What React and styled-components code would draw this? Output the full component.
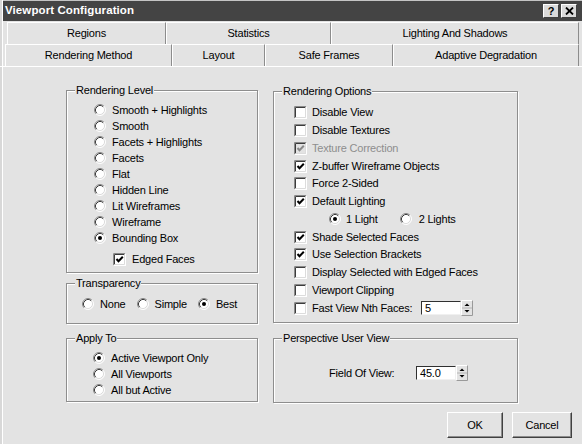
import React from "react";
import styled, { createGlobalStyle } from "styled-components";

const GlobalStyle = createGlobalStyle`
  html, body { margin: 0; padding: 0; background: #e3e3e3; }
  body {
    font-family: "Liberation Sans", Arial, sans-serif;
    font-size: 11px;
    letter-spacing: -0.2px;
    color: #000;
  }
  * { box-sizing: border-box; }
`;

const Window = styled.div`
  width: 582px;
  height: 444px;
  overflow: hidden;
  display: flex;
  flex-direction: column;
  background: #e3e3e3;
  box-shadow: inset 2px 0 0 #d8d8d8, inset 3px 0 0 #ffffff;
`;

const TitleBar = styled.div`
  height: 21px;
  margin-left: 3px;
  border-top: 1px solid #c4c4c4;
  background: #444444;
  display: flex;
  align-items: center;
  justify-content: space-between;
  padding: 0 5px 0 2px;
`;

const TitleText = styled.span`
  color: #fff;
  font-weight: bold;
  font-size: 11.5px;
  letter-spacing: 0.1px;
  line-height: 1;
`;

const CaptionButtons = styled.div`
  display: flex;
  gap: 2px;
`;

const CaptionButton = styled.div`
  width: 16px;
  height: 14px;
  background: #dadada;
  border: 1px solid;
  border-color: #ffffff #404040 #404040 #ffffff;
  display: flex;
  align-items: center;
  justify-content: center;
  font-weight: bold;
  font-size: 11px;
  line-height: 1;
  color: #000;
`;

const TabStrip = styled.div`
  margin-top: 1px;
  display: flex;
  flex-direction: column;
`;

const TabRow = styled.div`
  display: flex;
  height: 22px;
  padding-left: ${(p) => p.$indent}px;
`;

const Tab = styled.div`
  width: ${(p) => p.$w}px;
  border-top: 1px solid #ffffff;
  border-left: 1px solid #ffffff;
  border-right: 1px solid #8c8c8c;
  display: flex;
  align-items: center;
  justify-content: center;
  line-height: 1;
  white-space: nowrap;
`;

const Panel = styled.div`
  border-top: 1px solid #ffffff;
  display: flex;
  gap: 15px;
  padding-left: 66px;
`;

const Column = styled.div`
  width: ${(p) => p.$w}px;
  display: flex;
  flex-direction: column;
  padding-top: ${(p) => p.$top}px;
`;

const Group = styled.div`
  position: relative;
  height: ${(p) => p.$h}px;
  margin-top: ${(p) => p.$mt || 0}px;
  border: 1px solid #8e8e8e;
  box-shadow: inset 1px 1px 0 #ffffff, 1px 1px 0 #ffffff;
  padding: ${(p) => p.$pt}px 0 0 ${(p) => p.$pl}px;
`;

const Legend = styled.span`
  position: absolute;
  top: -7px;
  left: 8px;
  padding: 0 1px;
  background: #e3e3e3;
  line-height: 13px;
  white-space: nowrap;
`;

const OptionRow = styled.div`
  display: flex;
  align-items: center;
  height: ${(p) => p.$h || 16}px;
  gap: ${(p) => (p.$gap == null ? 6 : p.$gap)}px;
  padding-left: ${(p) => p.$indent || 0}px;
  margin-top: ${(p) => p.$mt || 0}px;
  color: ${(p) => (p.$disabled ? "#8e8e8e" : "#000")};
  white-space: nowrap;
  line-height: 1;
`;

const Choice = styled.span`
  display: inline-flex;
  align-items: center;
  gap: ${(p) => p.$gap || 6}px;
`;

const Label = styled.span`
  width: ${(p) => p.$w}px;
  flex: none;
`;

const NumberBox = styled.div`
  width: 40px;
  height: 14px;
  background: #fff;
  border-top: 1px solid #303030;
  border-left: 1px solid #303030;
  border-right: 1px solid #f0f0f0;
  border-bottom: 1px solid #f0f0f0;
  padding-left: 3px;
  display: flex;
  align-items: center;
  font-size: 11px;
`;

const Spin = styled.div`
  display: flex;
  align-items: center;
`;

const Footer = styled.div`
  display: flex;
  justify-content: flex-end;
  gap: 9px;
  padding-right: 10px;
  margin-top: 9px;
`;

const PushButton = styled.div`
  width: ${(p) => p.$w}px;
  height: 26px;
  background: #e3e3e3;
  border: 1px solid;
  border-color: #ffffff #404040 #404040 #ffffff;
  box-shadow: inset -1px -1px 0 #8c8c8c;
  display: flex;
  align-items: center;
  justify-content: center;
  line-height: 1;
`;

const Glyph = styled.svg`
  flex: none;
  display: block;
`;

const Radio = ({ checked }) => (
  <Glyph width="12" height="12" viewBox="0 0 12 12">
    <circle cx="6" cy="6" r="5" fill="#ffffff" />
    <path d="M9.89 2.11 A5.5 5.5 0 0 0 2.11 9.89" fill="none" stroke="#8a8a8a" strokeWidth="1" />
    <path d="M9.18 2.82 A4.5 4.5 0 0 0 2.82 9.18" fill="none" stroke="#3c3c3c" strokeWidth="1" />
    <path d="M9.89 2.11 A5.5 5.5 0 0 1 2.11 9.89" fill="none" stroke="#ffffff" strokeWidth="1" />
    <path d="M9.18 2.82 A4.5 4.5 0 0 1 2.82 9.18" fill="none" stroke="#dcdcdc" strokeWidth="1" />
    {checked && <circle cx="6" cy="6" r="2" fill="#000" />}
  </Glyph>
);

const Check = ({ checked, disabled }) => (
  <Glyph width="13" height="13" viewBox="0 0 13 13">
    <rect x="0" y="0" width="13" height="13" fill={disabled ? "#e3e3e3" : "#ffffff"} />
    <path d="M0.5 12.5 V0.5 H12.5" fill="none" stroke="#8a8a8a" />
    <path d="M1.5 11.5 V1.5 H11.5" fill="none" stroke="#3c3c3c" />
    <path d="M12.5 0.5 V12.5 H0.5" fill="none" stroke="#ffffff" />
    <path d="M11.5 1.5 V11.5 H1.5" fill="none" stroke="#dcdcdc" />
    {checked && (
      <path
        d="M3.5 6 L5.5 8.2 L9.8 3.8"
        fill="none"
        stroke={disabled ? "#8a8a8a" : "#000"}
        strokeWidth="2"
      />
    )}
  </Glyph>
);

const Arrows = () => (
  <Glyph width="12" height="16" viewBox="0 0 12 16">
    <rect x="0" y="0" width="12" height="16" fill="#e3e3e3" />
    <path d="M0.5 15.5 V0.5 H11.5" fill="none" stroke="#ffffff" />
    <path d="M11.5 0.5 V15.5 H0.5" fill="none" stroke="#9a9a9a" />
    <line x1="1" y1="8" x2="11" y2="8" stroke="#b4b4b4" />
    <path d="M6 3.5 L8.5 6 H3.5 Z" fill="#000" />
    <path d="M3.5 10 H8.5 L6 12.5 Z" fill="#000" />
  </Glyph>
);

const CloseGlyph = () => (
  <Glyph width="9" height="8" viewBox="0 0 9 8">
    <path d="M1 0.5 L8 7.5 M8 0.5 L1 7.5" stroke="#000" strokeWidth="1.8" />
  </Glyph>
);

const SpinField = ({ value }) => (
  <Spin>
    <NumberBox>{value}</NumberBox>
    <Arrows />
  </Spin>
);

const levels = [
  ["Smooth + Highlights", false],
  ["Smooth", false],
  ["Facets + Highlights", false],
  ["Facets", false],
  ["Flat", false],
  ["Hidden Line", false],
  ["Lit Wireframes", false],
  ["Wireframe", false],
  ["Bounding Box", true],
];

const ROW = 17.75;

export default function App() {
  return (
    <>
      <GlobalStyle />
      <Window>
        <TitleBar>
          <TitleText>Viewport Configuration</TitleText>
          <CaptionButtons>
            <CaptionButton>?</CaptionButton>
            <CaptionButton>
              <CloseGlyph />
            </CaptionButton>
          </CaptionButtons>
        </TitleBar>

        <TabStrip>
          <TabRow $indent={7}>
            <Tab $w={159}>Regions</Tab>
            <Tab $w={165}>Statistics</Tab>
            <Tab $w={248}>Lighting And Shadows</Tab>
          </TabRow>
          <TabRow $indent={5}>
            <Tab $w={167}>Rendering Method</Tab>
            <Tab $w={93}>Layout</Tab>
            <Tab $w={128}>Safe Frames</Tab>
            <Tab $w={186}>Adaptive Degradation</Tab>
          </TabRow>
        </TabStrip>

        <Panel>
          <Column $w={192} $top={23}>
            <Group $h={183} $pt={11} $pl={27}>
              <Legend>Rendering Level</Legend>
              {levels.map(([name, on]) => (
                <OptionRow key={name}>
                  <Radio checked={on} />
                  <span>{name}</span>
                </OptionRow>
              ))}
              <OptionRow $mt={5} $indent={19}>
                <Check checked />
                <span>Edged Faces</span>
              </OptionRow>
            </Group>

            <Group $h={41} $mt={10} $pt={12} $pl={15}>
              <Legend>Transparency</Legend>
              <OptionRow $gap={11}>
                <Choice>
                  <Radio />
                  <span>None</span>
                </Choice>
                <Choice>
                  <Radio />
                  <span>Simple</span>
                </Choice>
                <Choice>
                  <Radio checked />
                  <span>Best</span>
                </Choice>
              </OptionRow>
            </Group>

            <Group $h={64} $mt={14} $pt={11} $pl={26}>
              <Legend>Apply To</Legend>
              <OptionRow>
                <Radio checked />
                <span>Active Viewport Only</span>
              </OptionRow>
              <OptionRow>
                <Radio />
                <span>All Viewports</span>
              </OptionRow>
              <OptionRow>
                <Radio />
                <span>All but Active</span>
              </OptionRow>
            </Group>
          </Column>

          <Column $w={245} $top={24}>
            <Group $h={232} $pt={12} $pl={20}>
              <Legend>Rendering Options</Legend>
              <OptionRow $h={ROW} $gap={5}>
                <Check />
                <span>Disable View</span>
              </OptionRow>
              <OptionRow $h={ROW} $gap={5}>
                <Check />
                <span>Disable Textures</span>
              </OptionRow>
              <OptionRow $h={ROW} $gap={5} $disabled>
                <Check checked disabled />
                <span>Texture Correction</span>
              </OptionRow>
              <OptionRow $h={ROW} $gap={5}>
                <Check checked />
                <span>Z-buffer Wireframe Objects</span>
              </OptionRow>
              <OptionRow $h={ROW} $gap={5}>
                <Check />
                <span>Force 2-Sided</span>
              </OptionRow>
              <OptionRow $h={ROW} $gap={5}>
                <Check checked />
                <span>Default Lighting</span>
              </OptionRow>
              <OptionRow $h={ROW} $gap={22} $indent={35}>
                <Choice $gap={5}>
                  <Radio checked />
                  <span>1 Light</span>
                </Choice>
                <Choice $gap={7}>
                  <Radio />
                  <span>2 Lights</span>
                </Choice>
              </OptionRow>
              <OptionRow $h={ROW} $gap={5}>
                <Check checked />
                <span>Shade Selected Faces</span>
              </OptionRow>
              <OptionRow $h={ROW} $gap={5}>
                <Check checked />
                <span>Use Selection Brackets</span>
              </OptionRow>
              <OptionRow $h={ROW} $gap={5}>
                <Check />
                <span>Display Selected with Edged Faces</span>
              </OptionRow>
              <OptionRow $h={ROW} $gap={5}>
                <Check />
                <span>Viewport Clipping</span>
              </OptionRow>
              <OptionRow $h={ROW} $gap={5}>
                <Check />
                <Label $w={104}>Fast View Nth Faces:</Label>
                <SpinField value="5" />
              </OptionRow>
            </Group>

            <Group $h={65} $mt={15} $pt={26} $pl={55}>
              <Legend>Perspective User View</Legend>
              <OptionRow $gap={0}>
                <Label $w={87}>Field Of View:</Label>
                <SpinField value="45.0" />
              </OptionRow>
            </Group>
          </Column>
        </Panel>

        <Footer>
          <PushButton $w={56}>OK</PushButton>
          <PushButton $w={60}>Cancel</PushButton>
        </Footer>
      </Window>
    </>
  );
}
